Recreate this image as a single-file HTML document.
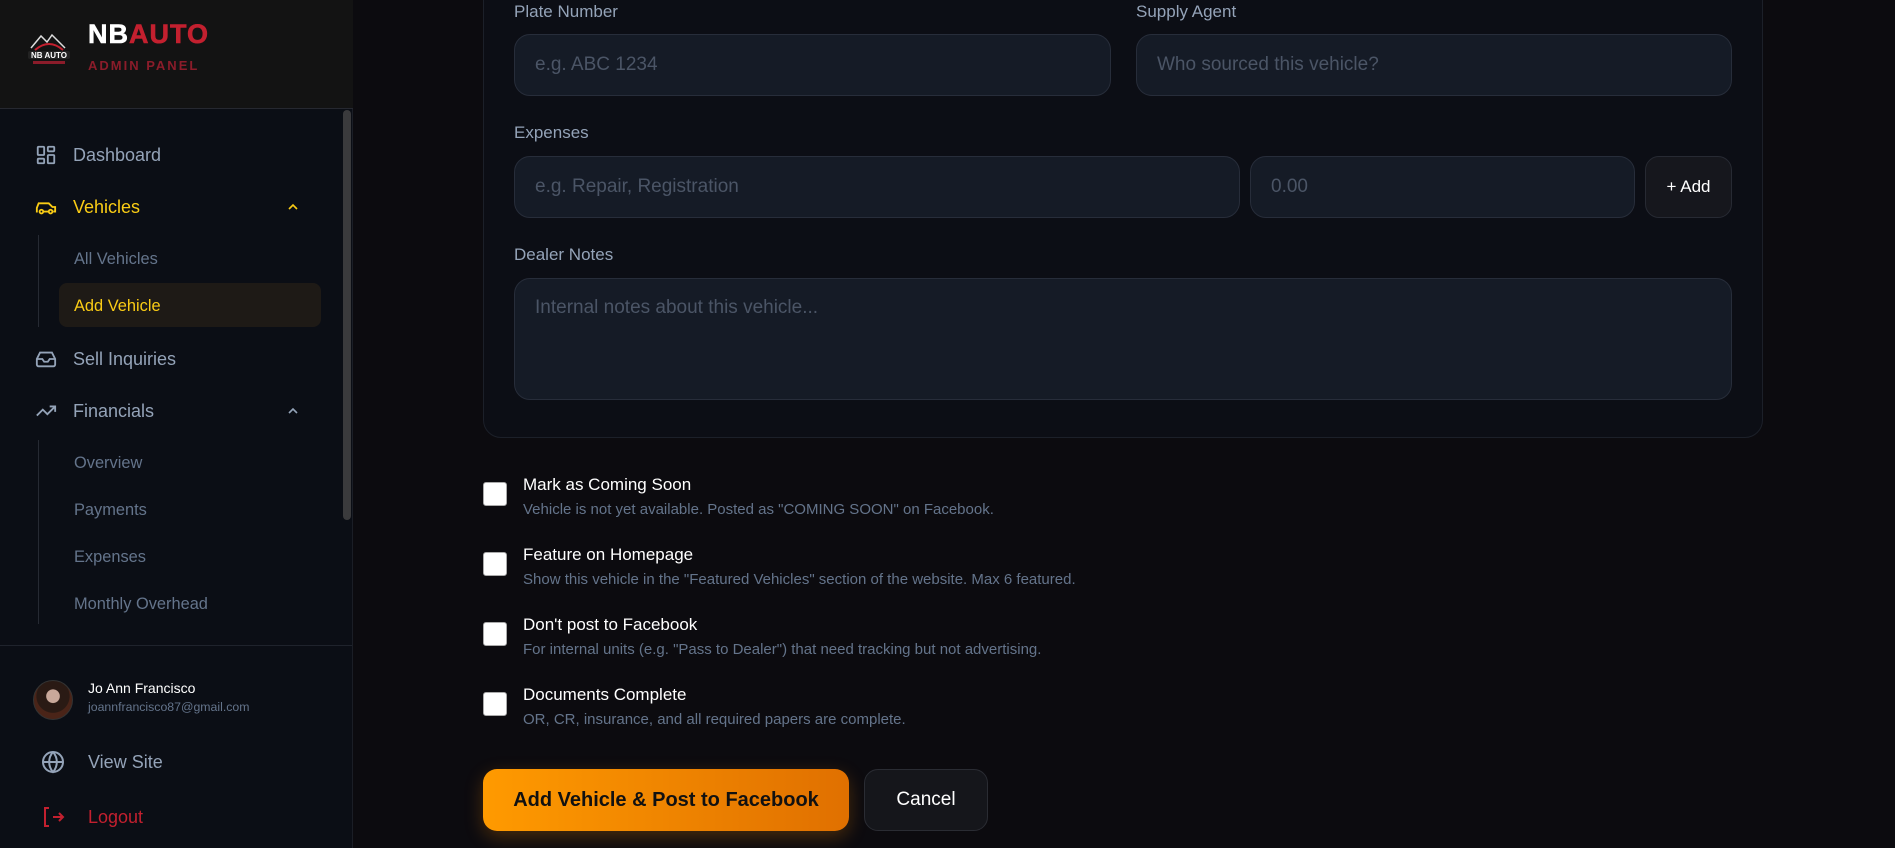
<!DOCTYPE html>
<html><head><meta charset="utf-8"><style>
*{box-sizing:border-box;margin:0;padding:0}
body{width:1895px;height:848px;overflow:hidden;background:#0c0b0f;font-family:"Liberation Sans",sans-serif;position:relative}
.a{position:absolute}
#side{left:0;top:0;width:353px;height:848px;background:#0b0e15;border-right:1px solid #1b1e26}
#head{left:0;top:0;width:353px;height:109px;background:#131313;border-bottom:1px solid #262830}
.nav{left:35px;font-size:18px;color:#94a3b8;display:flex;align-items:center;gap:0}
.nav svg{width:22px;height:22px;margin-right:16px;flex:none}
.sub{left:74px;font-size:16.4px;color:#64748b}
.inp{background:#151b26;border:1px solid #272d3a;border-radius:16px;color:#4b5566;font-size:19px;padding-left:20px;display:flex;align-items:center}
.lbl{font-size:17px;color:#94a3b8}
.cb{left:483px;width:24px;height:24px;background:#fff;border-radius:3px;border:1px solid #aaa}
.ct{left:523px;font-size:17px;color:#fff}
.cd{left:523px;font-size:15px;color:#64748b}
</style></head><body>
<div id="side" class="a"></div>
<div id="head" class="a"></div>
<div class="a" style="left:25px;top:30px;width:48px;height:40px">
<svg width="48" height="40" viewBox="0 0 48 40"><path d="M6 18 L16 6 L22 12 L27 5 L40 18" fill="none" stroke="#ddd" stroke-width="1.5"/><path d="M10 20 Q24 8 38 20" fill="none" stroke="#c3202f" stroke-width="2"/><rect x="3" y="21" width="42" height="8" rx="2" fill="#222"/><text x="24" y="28" font-size="8" font-weight="bold" fill="#fff" text-anchor="middle" font-family="Liberation Sans">NB AUTO</text><rect x="8" y="31" width="32" height="3" fill="#8b1c2a"/></svg></div>
<div class="a" style="left:88px;top:19px;font-size:27px;font-weight:bold;letter-spacing:1px;color:#fff;-webkit-text-stroke:0.6px">NB<span style="color:#c3202f">AUTO</span></div>
<div class="a" style="left:88px;top:58px;font-size:13px;font-weight:bold;letter-spacing:2px;color:#8b1c2a">ADMIN PANEL</div>
<div class="a" style="left:343px;top:110px;width:8px;height:410px;background:#3a3a3c;border-radius:4px"></div>

<div class="a nav" style="top:144px"><svg viewBox="0 0 24 24" fill="none" stroke="#94a3b8" stroke-width="2"><rect x="3" y="3" width="7" height="9" rx="1"/><rect x="14" y="3" width="7" height="5" rx="1"/><rect x="14" y="12" width="7" height="9" rx="1"/><rect x="3" y="16" width="7" height="5" rx="1"/></svg>Dashboard</div>
<div class="a nav" style="top:196px;color:#facc15"><svg viewBox="0 0 24 24" fill="none" stroke="#facc15" stroke-width="2"><path d="M3 17h-1v-4l2-5h11l4 4h3v5h-2"/><circle cx="7" cy="17" r="2"/><circle cx="17" cy="17" r="2"/><path d="M9 17h6"/></svg>Vehicles</div>
<svg class="a" style="left:286px;top:201px" width="14" height="12" viewBox="0 0 14 12"><path d="M3 8l4-4 4 4" fill="none" stroke="#facc15" stroke-width="1.6"/></svg>
<div class="a" style="left:38px;top:235px;width:1px;height:92px;background:#262a33"></div>
<div class="a sub" style="top:250px">All Vehicles</div>
<div class="a" style="left:59px;top:283px;width:262px;height:44px;background:#1e1a16;border-radius:8px"></div>
<div class="a sub" style="top:297px;color:#facc15">Add Vehicle</div>
<div class="a nav" style="top:348px"><svg viewBox="0 0 24 24" fill="none" stroke="#94a3b8" stroke-width="2"><path d="M22 12h-6l-2 3h-4l-2-3H2"/><path d="M5.5 5h13L22 12v6a2 2 0 0 1-2 2H4a2 2 0 0 1-2-2v-6z"/></svg>Sell Inquiries</div>
<div class="a nav" style="top:400px"><svg viewBox="0 0 24 24" fill="none" stroke="#94a3b8" stroke-width="2"><path d="M22 7l-8.5 8.5-5-5L2 17"/><path d="M16 7h6v6"/></svg>Financials</div>
<svg class="a" style="left:286px;top:405px" width="14" height="12" viewBox="0 0 14 12"><path d="M3 8l4-4 4 4" fill="none" stroke="#94a3b8" stroke-width="1.6"/></svg>
<div class="a" style="left:38px;top:440px;width:1px;height:184px;background:#262a33"></div>
<div class="a sub" style="top:454px">Overview</div>
<div class="a sub" style="top:501px">Payments</div>
<div class="a sub" style="top:548px">Expenses</div>
<div class="a sub" style="top:595px">Monthly Overhead</div>
<div class="a" style="left:0;top:645px;width:352px;height:1px;background:#1f232c"></div>
<div class="a" style="left:33px;top:680px;width:40px;height:40px;border-radius:50%;background:radial-gradient(circle at 50% 40%,#c9a89a 0 22%,#2a1a14 24% 55%,#4a2418 57%);border:1px solid #333"></div>
<div class="a" style="left:88px;top:680px;font-size:14px;color:#fff">Jo Ann Francisco</div>
<div class="a" style="left:88px;top:700px;font-size:12.3px;color:#64748b">joannfrancisco87@gmail.com</div>
<div class="a nav" style="left:41px;top:750px;color:#94a3b8"><svg viewBox="0 0 24 24" fill="none" stroke="#94a3b8" stroke-width="2" style="width:24px;height:24px;margin-right:23px"><circle cx="12" cy="12" r="10"/><path d="M2 12h20"/><path d="M12 2a15 15 0 0 1 0 20a15 15 0 0 1 0-20"/></svg>View Site</div>
<div class="a nav" style="left:41px;top:805px;color:#c3202f"><svg viewBox="0 0 24 24" fill="none" stroke="#c3202f" stroke-width="2" style="width:24px;height:24px;margin-right:23px"><path d="M8 3H4v18h4"/><path d="M12 12h10M18 8l4 4-4 4"/></svg>Logout</div>

<div class="a" style="left:483px;top:-30px;width:1280px;height:468px;background:#0c0e15;border:1px solid #1c2029;border-radius:18px"></div>
<div class="a lbl" style="left:514px;top:2px">Plate Number</div>
<div class="a lbl" style="left:1136px;top:2px">Supply Agent</div>
<div class="a inp" style="left:514px;top:34px;width:597px;height:62px">e.g. ABC 1234</div>
<div class="a inp" style="left:1136px;top:34px;width:596px;height:62px">Who sourced this vehicle?</div>
<div class="a lbl" style="left:514px;top:123px">Expenses</div>
<div class="a inp" style="left:514px;top:156px;width:726px;height:62px">e.g. Repair, Registration</div>
<div class="a inp" style="left:1250px;top:156px;width:385px;height:62px">0.00</div>
<div class="a" style="left:1645px;top:156px;width:87px;height:62px;background:#16171d;border:1px solid #272a33;border-radius:14px;color:#fff;font-size:17px;display:flex;align-items:center;justify-content:center">+ Add</div>
<div class="a lbl" style="left:514px;top:245px">Dealer Notes</div>
<div class="a inp" style="left:514px;top:278px;width:1218px;height:122px;align-items:flex-start;padding-top:18px">Internal notes about this vehicle...</div>

<div class="a cb" style="top:482px"></div>
<div class="a ct" style="top:475px">Mark as Coming Soon</div>
<div class="a cd" style="top:501px">Vehicle is not yet available. Posted as "COMING SOON" on Facebook.</div>
<div class="a cb" style="top:552px"></div>
<div class="a ct" style="top:545px">Feature on Homepage</div>
<div class="a cd" style="top:571px">Show this vehicle in the "Featured Vehicles" section of the website. Max 6 featured.</div>
<div class="a cb" style="top:622px"></div>
<div class="a ct" style="top:615px">Don't post to Facebook</div>
<div class="a cd" style="top:641px">For internal units (e.g. "Pass to Dealer") that need tracking but not advertising.</div>
<div class="a cb" style="top:692px"></div>
<div class="a ct" style="top:685px">Documents Complete</div>
<div class="a cd" style="top:711px">OR, CR, insurance, and all required papers are complete.</div>

<div class="a" style="left:483px;top:769px;width:366px;height:62px;border-radius:14px;background:linear-gradient(90deg,#ff9a00,#e07000);box-shadow:0 6px 18px rgba(255,140,0,0.25);color:#111;font-weight:bold;font-size:20px;display:flex;align-items:center;justify-content:center">Add Vehicle &amp; Post to Facebook</div>
<div class="a" style="left:864px;top:769px;width:124px;height:62px;border-radius:14px;background:#15161b;border:1px solid #2a2c33;color:#fff;font-size:19px;display:flex;align-items:center;justify-content:center">Cancel</div>
</body></html>
